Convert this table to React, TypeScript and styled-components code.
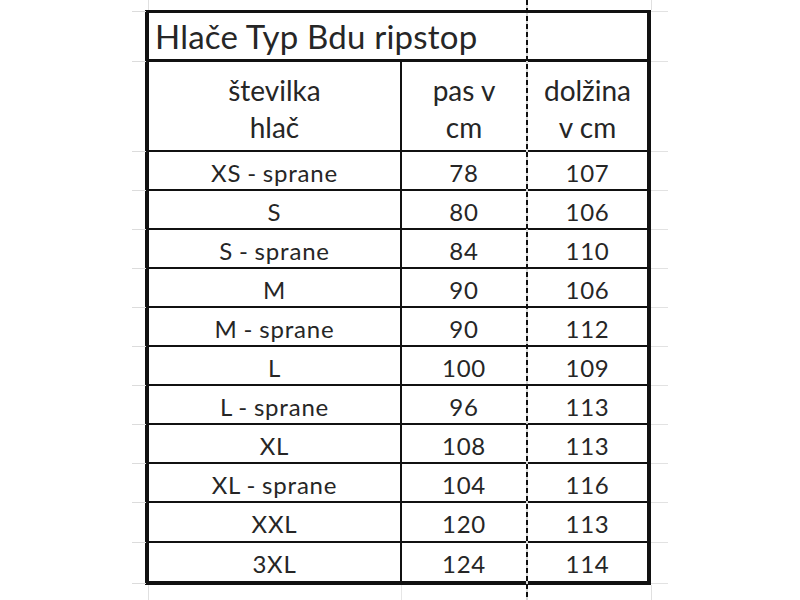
import React from "react";
import styled, { createGlobalStyle } from "styled-components";

const Global = createGlobalStyle`
  html, body { margin: 0; padding: 0; background: #ffffff; }
  body { font-family: Lato, "Open Sans", sans-serif; }
`;

const Sheet = styled.div`
  position: relative;
  width: 800px;
  height: 600px;
  overflow: hidden;
  background: #ffffff;
  padding: 10px 0 0 145px;
  box-sizing: border-box;
`;

const GridMarks = styled.svg`
  position: absolute;
  left: 0;
  top: 0;
  pointer-events: none;
`;

const PageBreak = styled.div`
  position: absolute;
  left: 526px;
  top: 0;
  width: 2px;
  height: 600px;
  background: repeating-linear-gradient(
    to bottom,
    #111 0px,
    #111 5px,
    #d8d8d8 5px,
    #d8d8d8 8px
  );
  pointer-events: none;
`;

const Table = styled.div`
  display: grid;
  grid-template-columns: 253px 124px 121px;
  grid-template-rows: 49px 90px repeat(9, 39px) 40px 38px;
  width: 498px;
  border: 4px solid #111;
  border-top-width: 3px;
  color: #262626;
  font-family: Lato, "Open Sans", sans-serif;
`;

const TitleCell = styled.div`
  grid-column: 1 / span 2;
  display: flex;
  align-items: center;
  padding: 1px 0 0 6px;
  font-size: 33px;
  letter-spacing: 0.2px;
  line-height: 45px;
  border-bottom: 3px solid #111;
  box-sizing: border-box;
`;

const TitleFill = styled.div`
  border-bottom: 3px solid #111;
  box-sizing: border-box;
`;

const Cell = styled.div<{ $col: number; $last?: boolean }>`
  display: flex;
  align-items: center;
  justify-content: center;
  text-align: center;
  font-size: 24px;
  letter-spacing: 0.8px;
  word-spacing: -1px;
  padding-top: 3px;
  box-sizing: border-box;
  border-bottom: ${(p) => (p.$last ? "none" : "2px solid #111")};
  border-right: ${(p) => (p.$col === 0 ? "2px solid #111" : "none")};
  border-left: ${(p) => (p.$col === 2 ? "2px solid #c8c8c8" : "none")};
`;

const HeadCell = styled(Cell)`
  align-items: flex-start;
  font-size: 28px;
  letter-spacing: 0;
  word-spacing: 0;
  line-height: 37px;
  padding-top: 10px;
`;

const rows: [string, string, string][] = [
  ["XS - sprane", "78", "107"],
  ["S", "80", "106"],
  ["S - sprane", "84", "110"],
  ["M", "90", "106"],
  ["M - sprane", "90", "112"],
  ["L", "100", "109"],
  ["L - sprane", "96", "113"],
  ["XL", "108", "113"],
  ["XL - sprane", "104", "116"],
  ["XXL", "120", "113"],
  ["3XL", "124", "114"],
];

const rowLines = [11, 61, 151, 190, 229, 268, 307, 346, 385, 424, 463, 502, 542, 583];

export default function App() {
  return (
    <>
      <Global />
      <Sheet>
        <GridMarks width={800} height={600}>
          {rowLines.map((y) => (
            <g key={y}>
              <line x1={132} x2={146} y1={y + 0.5} y2={y + 0.5} stroke="#dcdcdc" strokeWidth={1} />
              <line x1={651} x2={668} y1={y + 0.5} y2={y + 0.5} stroke="#e2e2e2" strokeWidth={1} />
            </g>
          ))}
          <line x1={148.5} x2={148.5} y1={0} y2={10} stroke="#e0e0e0" />
          <line x1={651.5} x2={651.5} y1={0} y2={10} stroke="#e0e0e0" />
          <line x1={148.5} x2={148.5} y1={585} y2={600} stroke="#e0e0e0" />
          <line x1={401.5} x2={401.5} y1={585} y2={600} stroke="#e6e6e6" />
          <line x1={651.5} x2={651.5} y1={585} y2={600} stroke="#e0e0e0" />
        </GridMarks>
        <Table>
          <TitleCell>Hlače Typ Bdu ripstop</TitleCell>
          <TitleFill />
          <HeadCell $col={0}>
            številka
            <br />
            hlač
          </HeadCell>
          <HeadCell $col={1}>
            pas v
            <br />
            cm
          </HeadCell>
          <HeadCell $col={2}>
            dolžina
            <br />v cm
          </HeadCell>
          {rows.map((r, i) =>
            r.map((v, c) => (
              <Cell key={`${i}-${c}`} $col={c} $last={i === rows.length - 1}>
                {v}
              </Cell>
            ))
          )}
        </Table>
        <PageBreak />
      </Sheet>
    </>
  );
}
